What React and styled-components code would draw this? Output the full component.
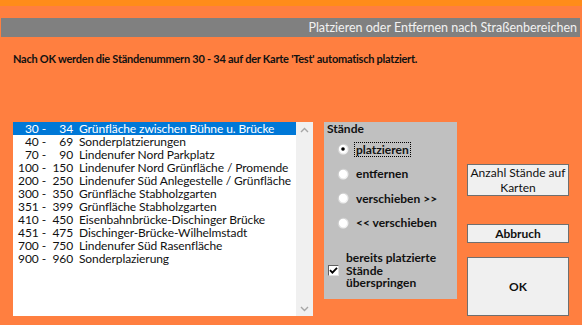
import React from 'react'
import styled, { createGlobalStyle } from 'styled-components'

const GlobalStyle = createGlobalStyle`
  html, body { margin: 0; padding: 0; background: #ff7f40; }
  body { font-family: Lato, "Noto Sans", sans-serif; }
`

const rows = [
  [30, 34, 'Grünfläche zwischen Bühne u. Brücke'],
  [40, 69, 'Sonderplatzierungen'],
  [70, 90, 'Lindenufer Nord Parkplatz'],
  [100, 150, 'Lindenufer Nord Grünfläche / Promende'],
  [200, 250, 'Lindenufer Süd Anlegestelle / Grünfläche'],
  [300, 350, 'Grünfläche Stabholzgarten'],
  [351, 399, 'Grünfläche Stabholzgarten'],
  [410, 450, 'Eisenbahnbrücke-Dischinger Brücke'],
  [451, 475, 'Dischinger-Brücke-Wilhelmstadt'],
  [700, 750, 'Lindenufer Süd Rasenfläche'],
  [900, 960, 'Sonderplazierung'],
]

const radios = ['platzieren', 'entfernen', 'verschieben >>', '<< verschieben']

export default function App() {
  return (
    <Window>
      <GlobalStyle />
      <TitleBar>Platzieren oder Entfernen nach Straßenbereichen</TitleBar>
      <Message>Nach OK werden die Ständenummern 30 - 34 auf der Karte 'Test' automatisch platziert.</Message>
      <Main>
        <ListBox>
          <ListItems>
            {rows.map(([a, b, name], i) => (
              <Row key={i} selected={i === 0}>
                <From>{a} -</From>
                <To>{b}</To>
                <Name>{name}</Name>
              </Row>
            ))}
          </ListItems>
          <ScrollBar>
            <Chevron viewBox="0 0 9 6"><path d="M1 5 L4.5 1.5 L8 5" /></Chevron>
            <Chevron viewBox="0 0 9 6"><path d="M1 1 L4.5 4.5 L8 1" /></Chevron>
          </ScrollBar>
        </ListBox>

        <Group>
          <GroupLabel>Stände</GroupLabel>
          {radios.map((r, i) => (
            <RadioRow key={r}>
              <svg width="12" height="12" viewBox="0 0 12 12">
                <defs>
                  <linearGradient id={'rg' + i} x1="0" y1="0" x2="1" y2="1">
                    <stop offset="0" stopColor="#b8b8b8" />
                    <stop offset="1" stopColor="#ffffff" />
                  </linearGradient>
                </defs>
                <circle cx="6" cy="6" r="5.5" fill={`url(#rg${i})`} />
                <circle cx="6" cy="6" r="4.2" fill="#fff" />
                {i === 0 && <circle cx="6" cy="6" r="1.8" fill="#000" />}
              </svg>
              <RadioText focused={i === 0}>{r}</RadioText>
            </RadioRow>
          ))}
          <CheckRow>
            <CheckBox>
              <svg width="9" height="9" viewBox="0 0 9 9">
                <path d="M1 4.2 L3.4 6.6 L8 1.8" fill="none" stroke="#000" strokeWidth="1.8" />
              </svg>
            </CheckBox>
            <CheckText>bereits platzierte Stände überspringen</CheckText>
          </CheckRow>
        </Group>

        <Buttons>
          <Button height={32} gap={42}>Anzahl Stände auf Karten</Button>
          <Button height={19} gap={28} bold>Abbruch</Button>
          <Button height={59} gap={14} bold>OK</Button>
        </Buttons>
      </Main>
    </Window>
  )
}

const Window = styled.div`
  width: 582px;
  height: 325px;
  box-sizing: border-box;
  border-top: 6px solid #ff8c1a;
  background: #ff7f40;
  overflow: hidden;
`

const TitleBar = styled.div`
  margin: 12px 2px 0 1px;
  height: 19px;
  background: #808080;
  color: #f2f2f2;
  font-size: 12.5px;
  line-height: 19px;
  text-align: right;
  padding-right: 3px;
`

const Message = styled.div`
  margin: 15px 0 0 13px;
  font-weight: bold;
  font-size: 11px;
  letter-spacing: -0.25px;
  color: #111;
  height: 14px;
  line-height: 14px;
`

const Main = styled.div`
  display: flex;
  margin: 56px 0 0 13px;
  align-items: flex-start;
`

const ListBox = styled.div`
  width: 300px;
  height: 194px;
  background: #fff;
  display: flex;
`

const ListItems = styled.div`
  flex: 1;
  font-size: 12px;
  letter-spacing: -0.1px;
  color: #111;
`

const Row = styled.div`
  display: flex;
  height: 13px;
  line-height: 13px;
  background: ${p => (p.selected ? '#0078d7' : 'transparent')};
  color: ${p => (p.selected ? '#fff' : '#111')};
  white-space: nowrap;
`

const From = styled.span`
  width: 33px;
  text-align: right;
  flex: none;
`

const To = styled.span`
  width: 25px;
  margin-left: 2px;
  text-align: right;
  flex: none;
`

const Name = styled.span`
  margin-left: 6px;
`

const ScrollBar = styled.div`
  width: 17px;
  background: #f0f0f0;
  display: flex;
  flex-direction: column;
  justify-content: space-between;
  align-items: center;
  padding: 5px 0 4px;
  box-sizing: border-box;
`

const Chevron = styled.svg`
  width: 9px;
  height: 6px;
  path { fill: none; stroke: #a6a6a6; stroke-width: 1.4; }
`

const Group = styled.div`
  width: 133px;
  height: 177px;
  margin-left: 11px;
  background: #c0c0c0;
  box-sizing: border-box;
  padding: 0 0 0 3px;
  font-weight: bold;
  font-size: 12px;
  color: #111;
`

const GroupLabel = styled.div`
  height: 15px;
  line-height: 14px;
`

const RadioRow = styled.div`
  display: flex;
  align-items: center;
  height: 24.5px;
  padding-left: 10px;
  gap: 6px;
  svg { flex: none; }
`

const RadioText = styled.span`
  outline: ${p => (p.focused ? '1px dotted #000' : 'none')};
  padding: 0 1px;
  line-height: 13px;
`

const CheckRow = styled.div`
  display: flex;
  align-items: center;
  margin-top: 17px;
  padding-left: 1px;
  gap: 7px;
`

const CheckBox = styled.div`
  width: 11px;
  height: 11px;
  box-sizing: border-box;
  background: #fff;
  border: 1px solid;
  border-color: #606060 #e0e0e0 #e0e0e0 #606060;
  display: flex;
  align-items: center;
  justify-content: center;
  flex: none;
`

const CheckText = styled.div`
  width: 100px;
  line-height: 12.5px;
`

const Buttons = styled.div`
  display: flex;
  flex-direction: column;
  margin-left: 10px;
  width: 102px;
`

const Button = styled.div`
  height: ${p => p.height}px;
  margin-top: ${p => p.gap}px;
  box-sizing: border-box;
  background: #f0f0f0;
  border: 1px solid #6f6f6f;
  display: flex;
  align-items: center;
  justify-content: center;
  text-align: center;
  font-size: 12px;
  line-height: 15px;
  font-weight: ${p => (p.bold ? 'bold' : 'normal')};
  color: #111;
`
